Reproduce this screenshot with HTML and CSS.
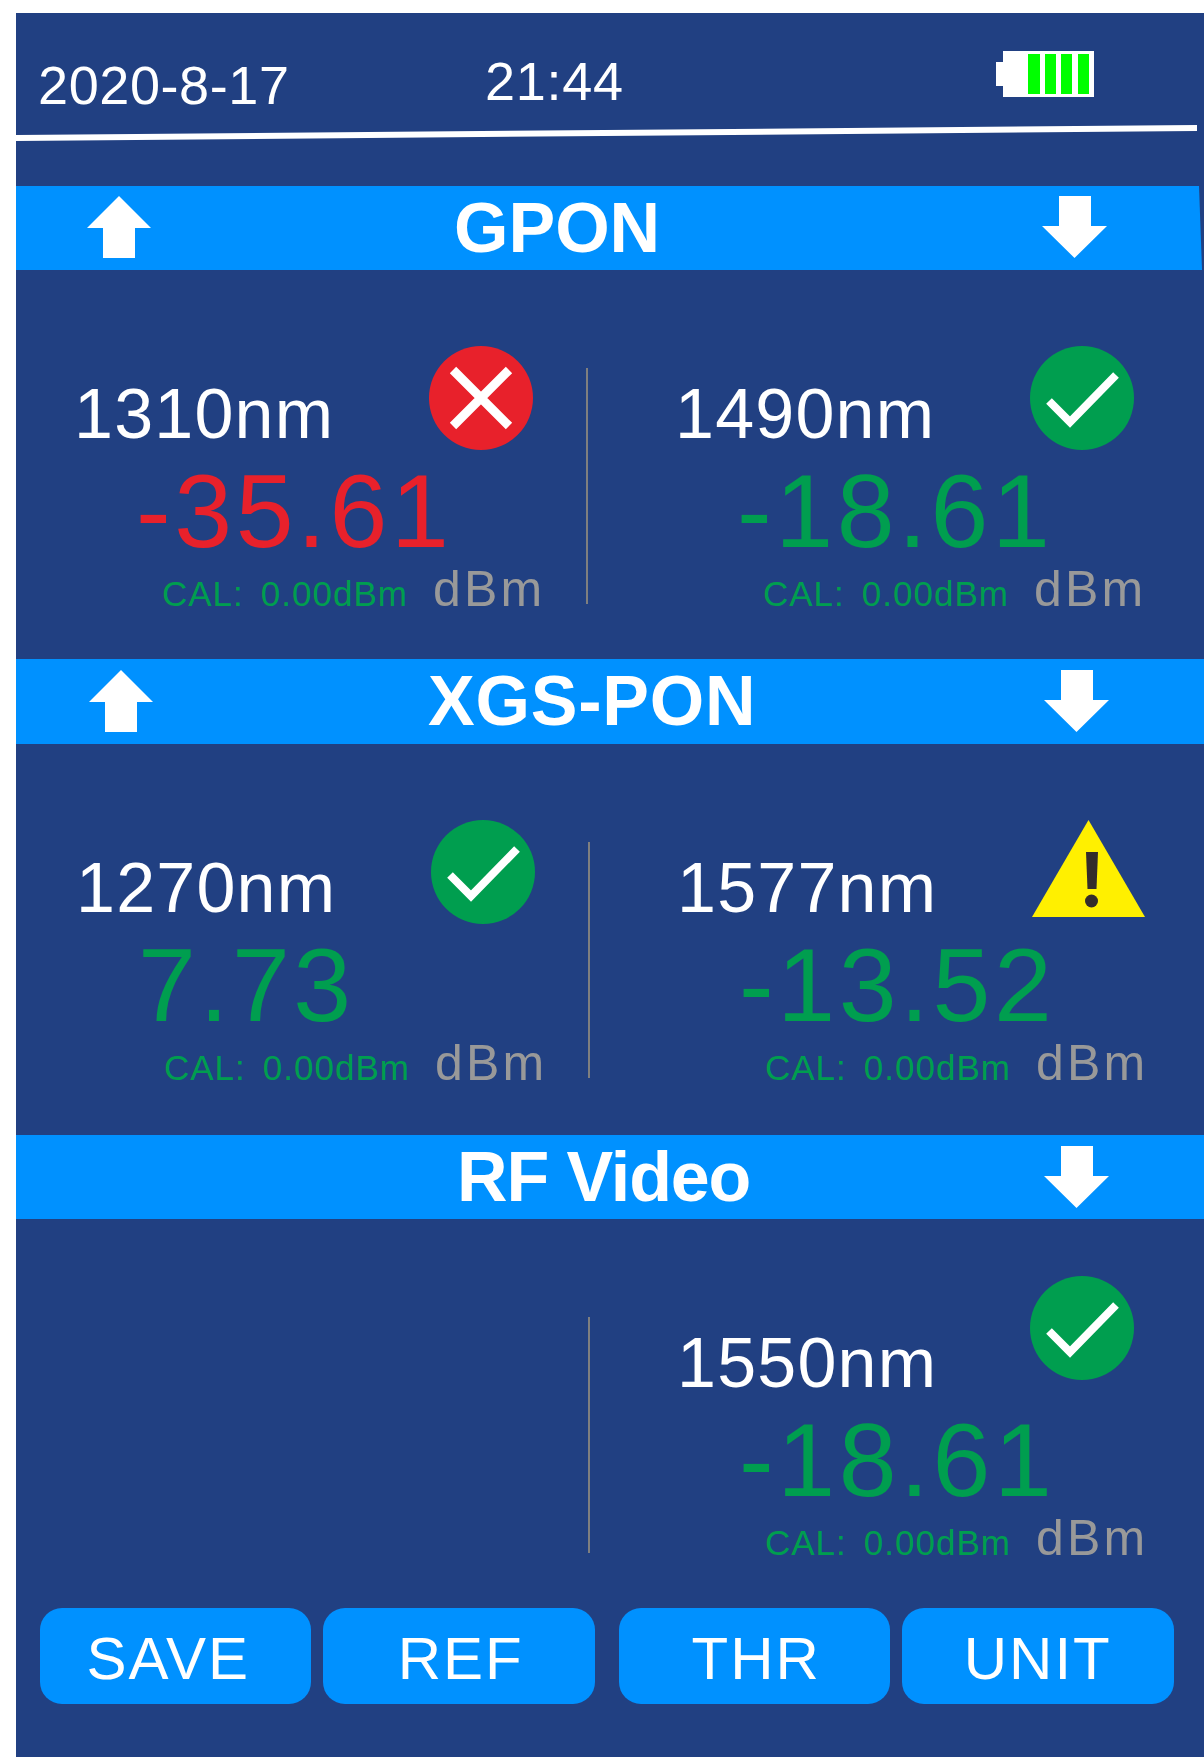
FILE: index.html
```html
<!DOCTYPE html>
<html lang="en">
<head>
    <meta charset="UTF-8">
    <meta name="viewport" content="width=device-width, initial-scale=1.0">
    <title>Optical power meter</title>
    <link rel="stylesheet" href="styles.css">
</head>
<body>
    <div class="screen">
        <div class="topbar">
            <div class="date">2020-8-17</div>
            <div class="time">21:44</div>
            <svg class="battery" width="98" height="46" viewBox="0 0 98 46">
                <path d="M7 0H98V46H7V35H0V11H7Z" fill="#fff"/>
                <rect x="32" y="3" width="12" height="40" fill="#00ff00"/>
                <rect x="49" y="3" width="11" height="40" fill="#00ff00"/>
                <rect x="65" y="3" width="11" height="40" fill="#00ff00"/>
                <rect x="82" y="3" width="11" height="40" fill="#00ff00"/>
            </svg>
        </div>
        <div class="topline"></div>

        <div class="section">
            <div class="bar bar-gpon">
                <svg class="arrow" width="64" height="62" viewBox="0 0 64 62"><path d="M32 0L64 32H48V62H16V32H0Z" fill="#fff"/></svg>
                <div class="bar-title">GPON</div>
                <svg class="arrow" width="65" height="62" viewBox="0 0 65 62"><path d="M17 0H49V30H65L32.5 62L0 30H17Z" fill="#fff"/></svg>
            </div>
            <div class="readings">
                <div class="cell cell-left">
                    <div class="head">
                        <div class="label">1310nm</div>
                        <svg class="icon" width="104" height="104" viewBox="0 0 104 104">
                            <circle cx="52" cy="52" r="52" fill="#e8212b"/>
                            <path d="M24 24L80 80M80 24L24 80" stroke="#fff" stroke-width="9" fill="none"/>
                        </svg>
                    </div>
                    <div class="value red">-35.61</div>
                    <div class="foot">
                        <div class="cal">CAL:&nbsp; 0.00dBm</div>
                        <div class="unit">dBm</div>
                    </div>
                </div>
                <div class="divider"></div>
                <div class="cell cell-right">
                    <div class="head">
                        <div class="label">1490nm</div>
                        <svg class="icon" width="104" height="104" viewBox="0 0 104 104">
                            <circle cx="52" cy="52" r="52" fill="#009e4f"/>
                            <path d="M19 55L40 76L86 29" stroke="#fff" stroke-width="8" fill="none"/>
                        </svg>
                    </div>
                    <div class="value green">-18.61</div>
                    <div class="foot">
                        <div class="cal">CAL:&nbsp; 0.00dBm</div>
                        <div class="unit">dBm</div>
                    </div>
                </div>
            </div>
        </div>

        <div class="section section-shift">
            <div class="bar bar-xgs">
                <svg class="arrow" width="64" height="62" viewBox="0 0 64 62"><path d="M32 0L64 32H48V62H16V32H0Z" fill="#fff"/></svg>
                <div class="bar-title">XGS-PON</div>
                <svg class="arrow" width="65" height="62" viewBox="0 0 65 62"><path d="M17 0H49V30H65L32.5 62L0 30H17Z" fill="#fff"/></svg>
            </div>
            <div class="readings readings-tall">
                <div class="cell cell-left">
                    <div class="head">
                        <div class="label">1270nm</div>
                        <svg class="icon" width="104" height="104" viewBox="0 0 104 104">
                            <circle cx="52" cy="52" r="52" fill="#009e4f"/>
                            <path d="M19 55L40 76L86 29" stroke="#fff" stroke-width="8" fill="none"/>
                        </svg>
                    </div>
                    <div class="value green">7.73</div>
                    <div class="foot">
                        <div class="cal">CAL:&nbsp; 0.00dBm</div>
                        <div class="unit">dBm</div>
                    </div>
                </div>
                <div class="divider"></div>
                <div class="cell cell-right">
                    <div class="head">
                        <div class="label">1577nm</div>
                        <svg class="icon" width="113" height="97" viewBox="0 0 113 97">
                            <path d="M56.5 0L113 97H0Z" fill="#fff000"/>
                            <path d="M54 32H66L64.5 69H55.5Z" fill="#332c2b"/>
                            <circle cx="59.5" cy="81" r="6.5" fill="#332c2b"/>
                        </svg>
                    </div>
                    <div class="value green">-13.52</div>
                    <div class="foot">
                        <div class="cal">CAL:&nbsp; 0.00dBm</div>
                        <div class="unit">dBm</div>
                    </div>
                </div>
            </div>
        </div>

        <div class="section section-shift">
            <div class="bar bar-rf">
                <svg class="arrow arrow-blank" width="64" height="62" viewBox="0 0 64 62"></svg>
                <div class="bar-title">RF Video</div>
                <svg class="arrow" width="65" height="62" viewBox="0 0 65 62"><path d="M17 0H49V30H65L32.5 62L0 30H17Z" fill="#fff"/></svg>
            </div>
            <div class="readings">
                <div class="cell cell-left"></div>
                <div class="divider"></div>
                <div class="cell cell-right">
                    <div class="head">
                        <div class="label">1550nm</div>
                        <svg class="icon icon-high" width="104" height="104" viewBox="0 0 104 104">
                            <circle cx="52" cy="52" r="52" fill="#009e4f"/>
                            <path d="M19 55L40 76L86 29" stroke="#fff" stroke-width="8" fill="none"/>
                        </svg>
                    </div>
                    <div class="value green">-18.61</div>
                    <div class="foot">
                        <div class="cal">CAL:&nbsp; 0.00dBm</div>
                        <div class="unit">dBm</div>
                    </div>
                </div>
            </div>
        </div>

        <div class="buttons">
            <div class="btn-group">
                <button class="btn btn-save">SAVE</button>
                <button class="btn btn-nudge">REF</button>
            </div>
            <div class="btn-group">
                <button class="btn btn-nudge">THR</button>
                <button class="btn">UNIT</button>
            </div>
        </div>
    </div>
</body>
</html>
```

FILE: styles.css
```css
* {
    margin: 0;
    padding: 0;
    box-sizing: border-box;
}
body {
    background: #fff;
    padding: 13px 0 1px 16px;
    font-family: "Liberation Sans", Arial, sans-serif;
}
.screen {
    width: 1188px;
    height: 1744px;
    background: #214082;
    color: #fff;
    overflow: hidden;
}
.topbar {
    display: flex;
    align-items: flex-start;
    height: 112px;
    padding-left: 22px;
    font-size: 54px;
    line-height: 1;
}
.date {
    width: 447px;
    margin-top: 45px;
    letter-spacing: 0.6px;
}
.time {
    width: 511px;
    margin-top: 41px;
    letter-spacing: 0.7px;
}
.battery {
    margin-top: 38px;
}
.topline {
    width: 1181px;
    height: 16px;
    background: #fff;
    clip-path: polygon(0 62%, 100% 0, 100% 38%, 0 100%);
    margin-bottom: 45px;
}
.bar {
    display: flex;
    align-items: flex-start;
    height: 84px;
    background: #0091ff;
}
.bar-gpon {
    clip-path: polygon(0 0, 1183px 0, 1186px 100%, 0 100%);
    padding-left: 71px;
}
.bar-xgs,
.bar-rf {
    height: 85px;
    padding-left: 73px;
}
.bar-rf {
    height: 84px;
}
.arrow {
    flex: none;
    margin-top: 10px;
}
.section-shift .arrow {
    margin-top: 11px;
}
.arrow-blank {
    visibility: hidden;
}
.bar-title {
    font-size: 70px;
    font-weight: bold;
    line-height: 84px;
}
.bar-gpon .bar-title {
    width: 891px;
    padding-left: 303px;
}
.bar-xgs .bar-title {
    width: 891px;
    padding-left: 275px;
    letter-spacing: 0.8px;
}
.bar-rf .bar-title {
    width: 891px;
    padding-left: 304px;
    letter-spacing: -1.1px;
}
.readings {
    display: flex;
    align-items: flex-start;
    height: 389px;
}
.readings-tall {
    height: 391px;
}
.section-shift .readings {
    padding-left: 2px;
}
.cell {
    padding-top: 76px;
}
.cell-left {
    width: 570px;
    padding-left: 58px;
}
.cell-right {
    padding-left: 87px;
}
.divider {
    flex: none;
    width: 2px;
    height: 236px;
    margin-top: 98px;
    background: #7f7f7f;
}
.head {
    display: flex;
    align-items: flex-start;
    height: 103px;
}
.label {
    width: 355px;
    margin-top: 33px;
    font-size: 70px;
    line-height: 1;
    letter-spacing: 1.2px;
}
.icon {
    flex: none;
}
.icon-high {
    margin: -19px 0 0 -2px;
}
.value {
    margin: 10px 0 0 62px;
    font-size: 104px;
    line-height: 1;
    letter-spacing: 3.6px;
}
.red {
    color: #e8212b;
}
.green {
    color: #009e4f;
}
.foot {
    display: flex;
    align-items: baseline;
    margin: 1px 0 0 88px;
    line-height: 1;
}
.cal {
    width: 271px;
    font-size: 35px;
    letter-spacing: 1px;
    word-spacing: -2.2px;
    color: #009e4f;
}
.unit {
    font-size: 50px;
    letter-spacing: 3.2px;
    color: #999;
}
.buttons {
    display: flex;
    gap: 24px;
    padding-left: 23.5px;
}
.btn-group {
    display: flex;
    gap: 12px;
}
.btn {
    width: 271.5px;
    height: 96px;
    padding-top: 6px;
    border: none;
    border-radius: 22px;
    background: #0091ff;
    color: #fff;
    font-family: inherit;
    font-size: 60px;
    line-height: 1;
    letter-spacing: 2px;
}
.btn-save {
    padding-right: 14px;
}
.btn-nudge {
    padding-left: 4px;
}
```
